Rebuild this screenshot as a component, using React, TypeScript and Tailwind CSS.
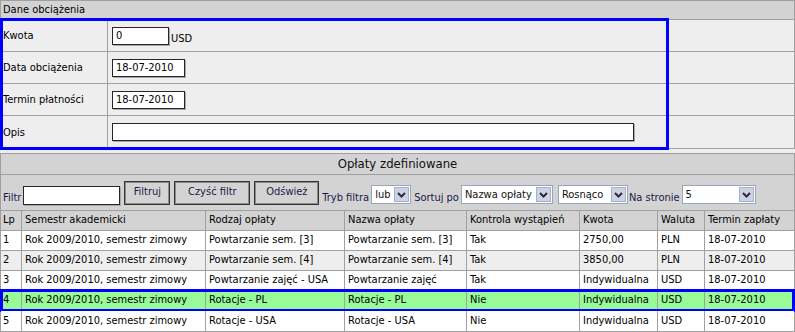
import React from "react";

const fees = [
  { lp: "1", sem: "Rok 2009/2010, semestr zimowy", kind: "Powtarzanie sem. [3]", name: "Powtarzanie sem. [3]", ctrl: "Tak", amount: "2750,00", cur: "PLN", due: "18-07-2010" },
  { lp: "2", sem: "Rok 2009/2010, semestr zimowy", kind: "Powtarzanie sem. [4]", name: "Powtarzanie sem. [4]", ctrl: "Tak", amount: "3850,00", cur: "PLN", due: "18-07-2010" },
  { lp: "3", sem: "Rok 2009/2010, semestr zimowy", kind: "Powtarzanie zajęć - USA", name: "Powtarzanie zajęć", ctrl: "Tak", amount: "Indywidualna", cur: "USD", due: "18-07-2010" },
  { lp: "4", sem: "Rok 2009/2010, semestr zimowy", kind: "Rotacje - PL", name: "Rotacje - PL", ctrl: "Nie", amount: "Indywidualna", cur: "USD", due: "18-07-2010" },
  { lp: "5", sem: "Rok 2009/2010, semestr zimowy", kind: "Rotacje - USA", name: "Rotacje - USA", ctrl: "Nie", amount: "Indywidualna", cur: "USD", due: "18-07-2010" },
];

const headers = ["Lp", "Semestr akademicki", "Rodzaj opłaty", "Nazwa opłaty", "Kontrola wystąpień", "Kwota", "Waluta", "Termin zapłaty"];

const gridCols = "grid grid-cols-[20px_184px_139px_122px_113px_78px_47px_1fr]";

function Chevron() {
  return (
    <svg width="9" height="6" viewBox="0 0 9 6">
      <path d="M1 1l3.5 3.5L8 1" fill="none" stroke="#2a2a3a" strokeWidth="2" />
    </svg>
  );
}

function Select({ value, className }: { value: string; className: string }) {
  return (
    <div className={`flex h-[19px] items-center border border-[#98a6bd] bg-white pl-[3px] pr-[1px] ${className}`}>
      <span className="flex-1 whitespace-nowrap text-[11px] leading-[14px] text-[#111]">{value}</span>
      <span className="flex h-[15px] w-[15px] shrink-0 items-center justify-center border border-[#a6b0c6] bg-[#cdd3e4]">
        <Chevron />
      </span>
    </div>
  );
}

function TextBox({ value, className }: { value?: string; className: string }) {
  return (
    <div className={`h-[18px] border border-[#262626] bg-white px-[3px] text-[11px] leading-[16px] text-black shadow-[1px_1px_0_#a8a8a8] ${className}`}>
      {value}
    </div>
  );
}

function Button({ label, className }: { label: string; className: string }) {
  return (
    <button className={`h-[24px] border border-[#333] bg-[#d3d3d3] pb-[3px] text-[11px] leading-none text-[#1a1a4a] shadow-[inset_0_0_0_1px_#8c8c8c] ${className}`}>
      {label}
    </button>
  );
}

export default function App() {
  return (
    <div className="w-[795px] h-[332px] bg-[#eeeeee] font-['DejaVu_Sans_Condensed','DejaVu_Sans',sans-serif] font-stretch-condensed text-[11px] text-black">
      {/* Dane obciążenia */}
      <div className="relative border border-[#a0a0a0] bg-[#eeeeee]">
        <div className="h-[19px] border-b border-[#a0a0a0] bg-[#d3d3d3] px-[2px] leading-[18px]">Dane obciążenia</div>
        <div className="flex h-[32px] border-b border-[#a0a0a0]">
          <div className="flex w-[107px] items-center border-r border-[#a0a0a0] px-[2px] pt-[2px]">Kwota</div>
          <div className="flex items-center pl-[4px]">
            <div className="flex items-end gap-[2px]">
              <TextBox value="0" className="w-[57px]" />
              <span className="leading-[12px]">USD</span>
            </div>
          </div>
        </div>
        <div className="flex h-[32px] border-b border-[#a0a0a0]">
          <div className="flex w-[107px] items-center border-r border-[#a0a0a0] px-[2px] pt-[2px]">Data obciążenia</div>
          <div className="flex items-center pl-[4px]">
            <TextBox value="18-07-2010" className="w-[73px]" />
          </div>
        </div>
        <div className="flex h-[32px] border-b border-[#a0a0a0]">
          <div className="flex w-[107px] items-center border-r border-[#a0a0a0] px-[2px] pt-[2px]">Termin płatności</div>
          <div className="flex items-center pl-[4px]">
            <TextBox value="18-07-2010" className="w-[73px]" />
          </div>
        </div>
        <div className="flex h-[32px]">
          <div className="flex w-[107px] items-center border-r border-[#a0a0a0] px-[2px] pt-[2px]">Opis</div>
          <div className="flex items-center pl-[4px]">
            <TextBox className="w-[522px]" />
          </div>
        </div>
        <div className="pointer-events-none absolute left-[-1px] top-[17px] h-[132px] w-[669px] border-[3px] border-[#0000ff]" />
      </div>

      {/* Opłaty zdefiniowane */}
      <div className="mt-[4px] border border-[#a0a0a0] bg-white">
        <div className="h-[21px] border-b border-[#a0a0a0] bg-[#d3d3d3] text-center text-[13px] leading-[20px] text-[#111]">
          Opłaty zdefiniowane
        </div>
        <div className="flex h-[36px] items-end border-b border-[#a0a0a0] bg-[#d3d3d3] pb-[5px] pl-[2px] text-[#1a1a4a]">
          <span className="leading-[14px]">Filtr</span>
          <TextBox className="ml-[2px] h-[19px] w-[97px]" />
          <Button label="Filtruj" className="ml-[4px] w-[46px]" />
          <Button label="Czyść filtr" className="ml-[4px] w-[76px]" />
          <Button label="Odśwież" className="ml-[4px] w-[65px]" />
          <span className="ml-[3px] leading-[14px]">Tryb filtra</span>
          <Select value="lub" className="ml-[2px] mb-[1px] w-[40px]" />
          <span className="ml-[3px] leading-[14px]">Sortuj po</span>
          <Select value="Nazwa opłaty" className="ml-[2px] mb-[1px] w-[92px]" />
          <Select value="Rosnąco" className="ml-[5px] mb-[1px] w-[70px]" />
          <span className="ml-[1px] leading-[14px]">Na stronie</span>
          <Select value="5" className="ml-[2px] mb-[1px] w-[74px]" />
        </div>
        <div className={`${gridCols} h-[20px] border-b border-[#a0a0a0] bg-[#d3d3d3]`}>
          {headers.map((h, i) => (
            <div key={h} className={`flex items-center truncate px-[3px] ${i > 0 ? "border-l border-[#a0a0a0]" : "pl-[2px]"}`}>
              {h}
            </div>
          ))}
        </div>
        {fees.map((f, r) => {
          const bg = r === 3 ? "bg-[#98fb98]" : r === 1 ? "bg-[#eeeeee]" : "bg-white";
          const cells = [f.lp, f.sem, f.kind, f.name, f.ctrl, f.amount, f.cur, f.due];
          return (
            <div key={f.lp} className={`relative ${gridCols} h-[20px] ${r < 4 ? "border-b border-[#a0a0a0]" : ""} ${bg}`}>
              {cells.map((c, i) => (
                <div key={i} className={`flex items-center truncate px-[3px] ${i > 0 ? "border-l border-[#a0a0a0]" : "pl-[2px]"}`}>
                  {c}
                </div>
              ))}
              {r === 3 && (
                <div className="pointer-events-none absolute -top-[2px] -bottom-[2px] -left-[1px] -right-[1px] border-[3px] border-[#0000ff]" />
              )}
            </div>
          );
        })}
      </div>
    </div>
  );
}
